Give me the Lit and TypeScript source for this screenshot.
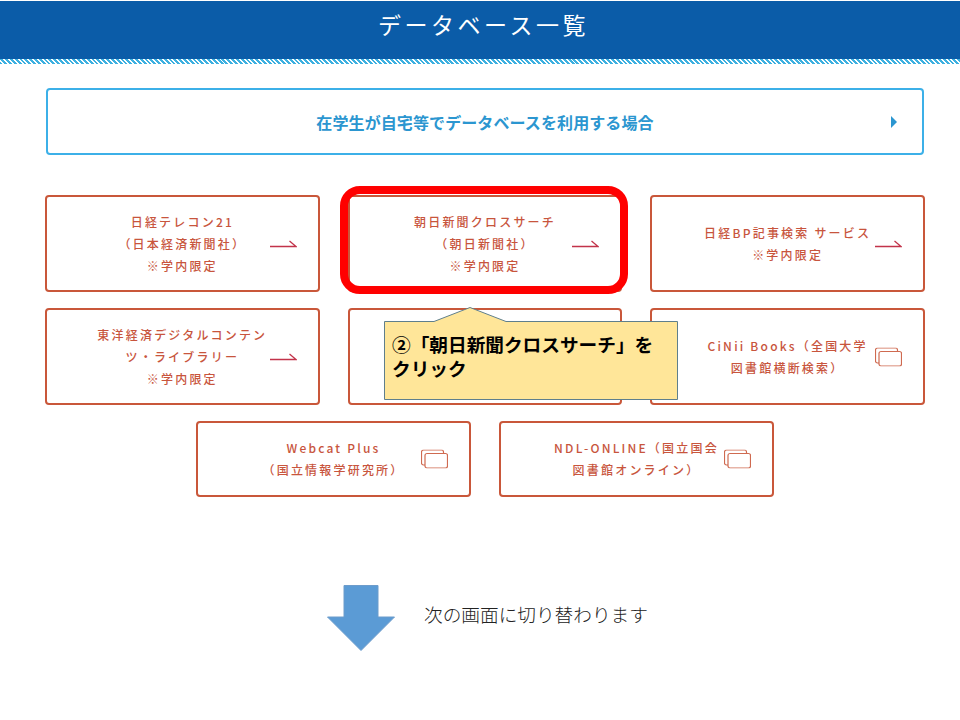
import { LitElement, css, html } from "lit";
import { customElement } from "lit/decorators.js";

const arrowIcon = html`<svg class="icon" width="27" height="12" viewBox="0 0 27 12" fill="none" stroke="#c2334a" stroke-width="1.3"><path d="M0 8.5H26L19.5 3"/></svg>`;
const windowIcon = html`<svg class="icon" width="27" height="19" viewBox="0 0 27 19" fill="none" stroke="#cf6a50" stroke-width="1.2"><path d="M4 15.5H2.5a2 2 0 0 1-2-2V2.5a2 2 0 0 1 2-2h18a2 2 0 0 1 2 2V4"/><rect x="4" y="4" width="22.5" height="14.5" rx="2"/></svg>`;

const cards = [
  { lines: ["日経テレコン21", "（日本経済新聞社）", "※学内限定"], icon: arrowIcon },
  { lines: ["朝日新聞クロスサーチ", "（朝日新聞社）", "※学内限定"], icon: arrowIcon },
  { lines: ["日経BP記事検索 サービス", "※学内限定"], icon: arrowIcon },
  { lines: ["東洋経済デジタルコンテン", "ツ・ライブラリー", "※学内限定"], icon: arrowIcon },
  { lines: [], icon: null },
  { lines: ["CiNii Books（全国大学", "図書館横断検索）"], icon: windowIcon },
];
const lastCards = [
  { lines: ["Webcat Plus", "（国立情報学研究所）"], icon: windowIcon },
  { lines: ["NDL-ONLINE（国立国会", "図書館オンライン）"], icon: windowIcon },
];

@customElement("app-root")
export class AppRoot extends LitElement {
  static styles = css`
    :host {
      display: block;
      position: relative;
      height: 720px;
      overflow: hidden;
      background: #fff;
      font-family: "Noto Sans CJK JP", "Noto Sans", sans-serif;
    }
    .header {
      height: 58px;
      margin-top: 1px;
      background: #0b5ca8;
      color: #fff;
      display: flex;
      align-items: center;
      justify-content: center;
      padding: 0 0 12px 7px;
      box-sizing: border-box;
      font-size: 23px;
      letter-spacing: 3.5px;
    }
    .stripe {
      height: 5px;
      background: repeating-linear-gradient(45deg, #3db0e0 0 2px, #fff 2px 3.4px);
    }
    .content {
      padding: 24px 35px 0 45px;
    }
    .banner {
      height: 67px;
      margin: 0 1px;
      box-sizing: border-box;
      border: 2px solid #3cb0e8;
      border-radius: 4px;
      display: flex;
      align-items: center;
      justify-content: center;
      position: relative;
      color: #2b96d0;
      font-size: 16px;
      font-weight: 700;
      letter-spacing: 0.1px;
    }
    .tri {
      position: absolute;
      right: 25px;
      top: 26px;
      border-left: 6px solid #2b96d0;
      border-top: 6px solid transparent;
      border-bottom: 6px solid transparent;
    }
    .grid {
      margin-top: 40px;
      display: grid;
      grid-template-columns: repeat(3, 1fr);
      gap: 16px 28px;
    }
    .last {
      margin-top: 16px;
      display: flex;
      justify-content: center;
      gap: 28px;
    }
    .last .card {
      width: 275px;
      height: 76px;
    }
    .card {
      height: 97px;
      box-sizing: border-box;
      border: 2px solid #c9573a;
      border-radius: 4px;
      display: flex;
      flex-direction: column;
      align-items: center;
      justify-content: center;
      position: relative;
      color: #c8553d;
      font-size: 12px;
      font-weight: 500;
      letter-spacing: 2.2px;
      line-height: 22px;
    }
    .icon {
      position: absolute;
      right: 21px;
      top: 50%;
      transform: translateY(-50%);
    }
    .note {
      margin-top: 88px;
      padding-left: 282px;
      display: flex;
      align-items: flex-start;
      gap: 27px;
      font-size: 18.67px;
      font-weight: 300;
      color: #222;
    }
    .note span {
      margin-top: 15px;
    }
    .highlight {
      position: absolute;
      left: 340px;
      top: 186px;
      width: 288px;
      height: 108px;
      box-sizing: border-box;
      border: 8px solid #f00;
      border-radius: 20px;
    }
    .callout {
      position: absolute;
      left: 384px;
      top: 307px;
      width: 295px;
      height: 94px;
    }
    .callout svg {
      position: absolute;
      inset: 0;
    }
    .callout p {
      position: relative;
      margin: 0;
      padding: 25px 8px 0 8px;
      font-size: 18.67px;
      line-height: 24px;
      font-weight: 700;
      color: #000;
    }
  `;

  renderCard(card: { lines: string[]; icon: unknown }) {
    return html`<div class="card">
      ${card.lines.map((l) => html`<div>${l}</div>`)} ${card.icon}
    </div>`;
  }

  render() {
    return html`
      <div class="header">データベース一覧</div>
      <div class="stripe"></div>
      <div class="content">
        <div class="banner">在学生が自宅等でデータベースを利用する場合<i class="tri"></i></div>
        <div class="grid">${cards.map((c) => this.renderCard(c))}</div>
        <div class="last">${lastCards.map((c) => this.renderCard(c))}</div>
        <div class="note">
          <svg width="70" height="68" viewBox="0 0 70 68">
            <path d="M17 0.5H51V32H67.5L34 65.5L0.5 32H17Z" fill="#5b9bd5" stroke="#6d9ccb"/>
          </svg>
          <span>次の画面に切り替わります</span>
        </div>
      </div>
      <div class="highlight"></div>
      <div class="callout">
        <svg width="295" height="94" viewBox="0 0 295 94">
          <path d="M0.5 14.5H50L86 0.5L122 14.5H293.5V92.5H0.5Z" fill="#ffe699" stroke="#5f7f8c"/>
        </svg>
        <p>②「朝日新聞クロスサーチ」を<br />クリック</p>
      </div>
    `;
  }
}
